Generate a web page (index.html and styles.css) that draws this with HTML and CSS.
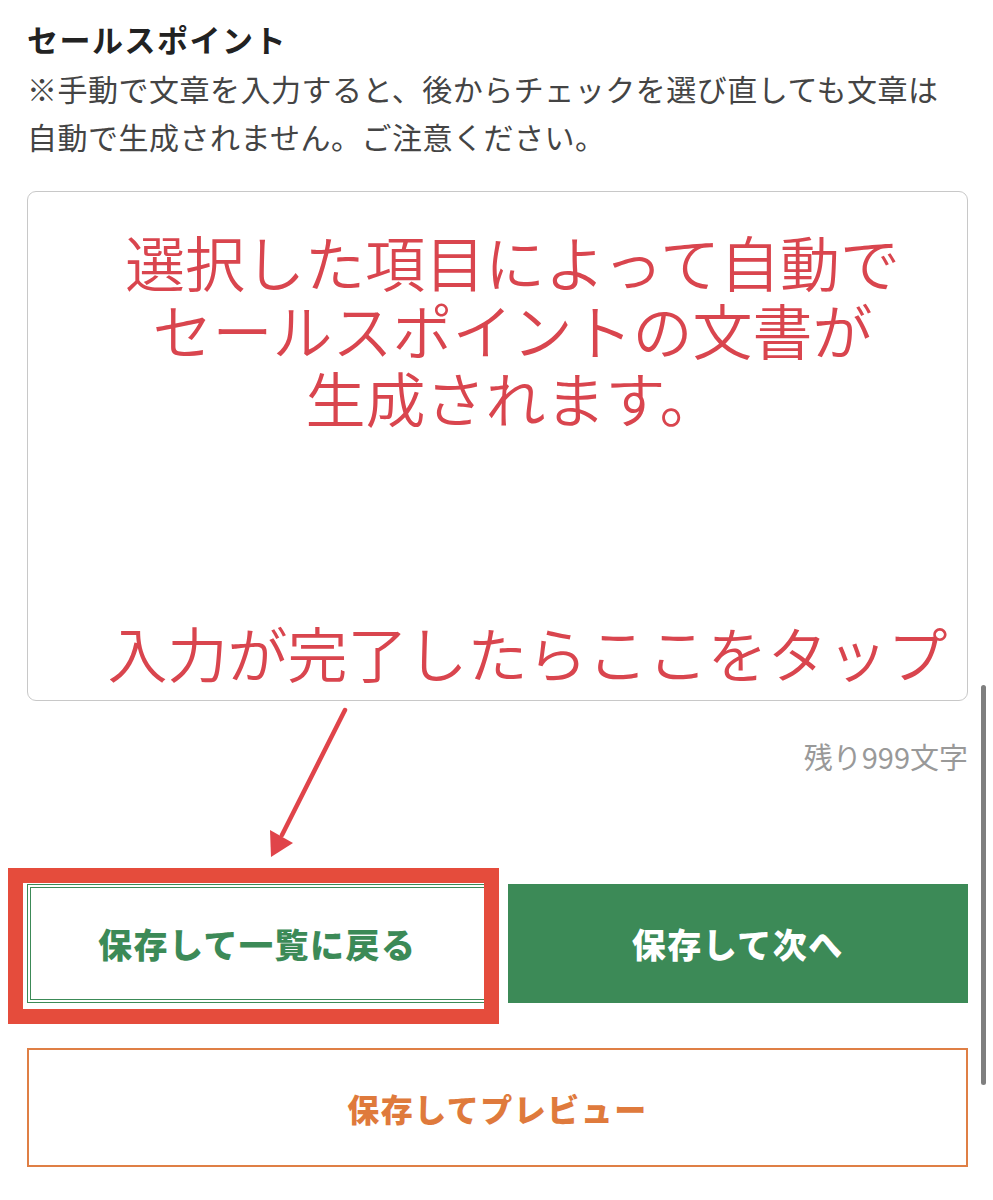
FILE: index.html
```html
<!DOCTYPE html>
<html lang="ja">
<head>
    <meta charset="UTF-8">
    <meta name="viewport" content="width=device-width, initial-scale=1.0">
    <title>セールスポイント</title>
    <link rel="stylesheet" href="styles.css">
</head>
<body>
    <div class="page">
        <h2 class="title">セールスポイント</h2>
        <p class="note">※手動で文章を入力すると、後からチェックを選び直しても文章は<br>自動で生成されません。ご注意ください。</p>

        <!-- text box with the hand-written hint -->
        <div class="textbox">
            <div class="hint">
                <span>選択した項目によって自動で</span>
                <span>セールスポイントの文書が</span>
                <span>生成されます。</span>
            </div>
            <div class="hint hint-tap">入力が完了したらここをタップ</div>
        </div>

        <div class="counter">残り999文字</div>

        <div class="buttons">
            <div class="marked">
                <button class="btn btn-back">保存して一覧に戻る</button>
            </div>
            <button class="btn btn-next">保存して次へ</button>
        </div>
        <button class="btn btn-preview">保存してプレビュー</button>
    </div>

    <!-- arrow drawn over the page -->
    <svg class="arrow" viewBox="0 0 100 160" xmlns="http://www.w3.org/2000/svg">
        <line x1="95" y1="10" x2="32" y2="135" stroke="#e0444a" stroke-width="4.5" stroke-linecap="round"/>
        <polygon points="20,130 43,143 21,157" fill="#e0444a"/>
    </svg>

    <div class="scrollbar"></div>
</body>
</html>
```

FILE: styles.css
```css
body {
    margin: 0;
    background: #fff;
    color: #333;
    font-family: "Noto Sans CJK JP", "Noto Sans", sans-serif;
    position: relative;
    min-height: 1200px;
}

.page {
    padding: 14px 25px 30px 27px;
}

.title {
    margin: 0;
    font-size: 31px;
    font-weight: 700;
    letter-spacing: 1.5px;
    line-height: 50px;
    color: #222;
}

.note {
    margin: 0;
    font-size: 30px;
    letter-spacing: 0.5px;
    line-height: 48px;
    color: #444;
}

.textbox {
    margin-top: 31px;
    height: 510px;
    border: 1.5px solid #c8c8c8;
    border-radius: 9px;
    display: flex;
    flex-direction: column;
    justify-content: space-between;
    padding: 35px 0 14px 30px;
    box-sizing: border-box;
    color: #d9454e;
}

.hint {
    display: flex;
    flex-direction: column;
    align-items: center;
    font-size: 60px;
    line-height: 68px;
    font-weight: 350;
}

.hint-tap {
    display: block;
    text-align: center;
    padding-left: 30px;
    white-space: nowrap;
}

.counter {
    margin-top: 34px;
    text-align: right;
    font-size: 29px;
    color: #999;
}

.buttons {
    margin-top: 107px;
    display: flex;
    gap: 20px;
}

.btn {
    font-family: "Noto Sans CJK JP", sans-serif;
    font-weight: 900;
    font-size: 34px;
    letter-spacing: 1.5px;
    height: 119px;
    background: #fff;
    cursor: pointer;
    padding: 0;
    border-radius: 0;
}

.marked {
    flex: 1;
    display: flex;
    position: relative;
}

/* red annotation frame over the first button */
.marked::after {
    content: "";
    position: absolute;
    left: -19px;
    top: -16px;
    right: -11px;
    bottom: -21px;
    border: 15px solid #e54c3c;
    pointer-events: none;
}

.btn-back {
    flex: 1;
    border: 4px double #3c8a57;
    color: #3c8a57;
}

.btn-next {
    flex: 1;
    border: none;
    background: #3c8a57;
    color: #fff;
}

.btn-preview {
    display: block;
    width: 100%;
    margin-top: 45px;
    border: 2px solid #df7f45;
    color: #df7a3c;
    font-size: 32px;
}

.arrow {
    position: absolute;
    left: 250px;
    top: 700px;
    width: 100px;
    height: 160px;
}

.scrollbar {
    position: absolute;
    left: 981px;
    top: 685px;
    width: 5px;
    height: 400px;
    border-radius: 3px;
    background: #7f7f7f;
}
```
